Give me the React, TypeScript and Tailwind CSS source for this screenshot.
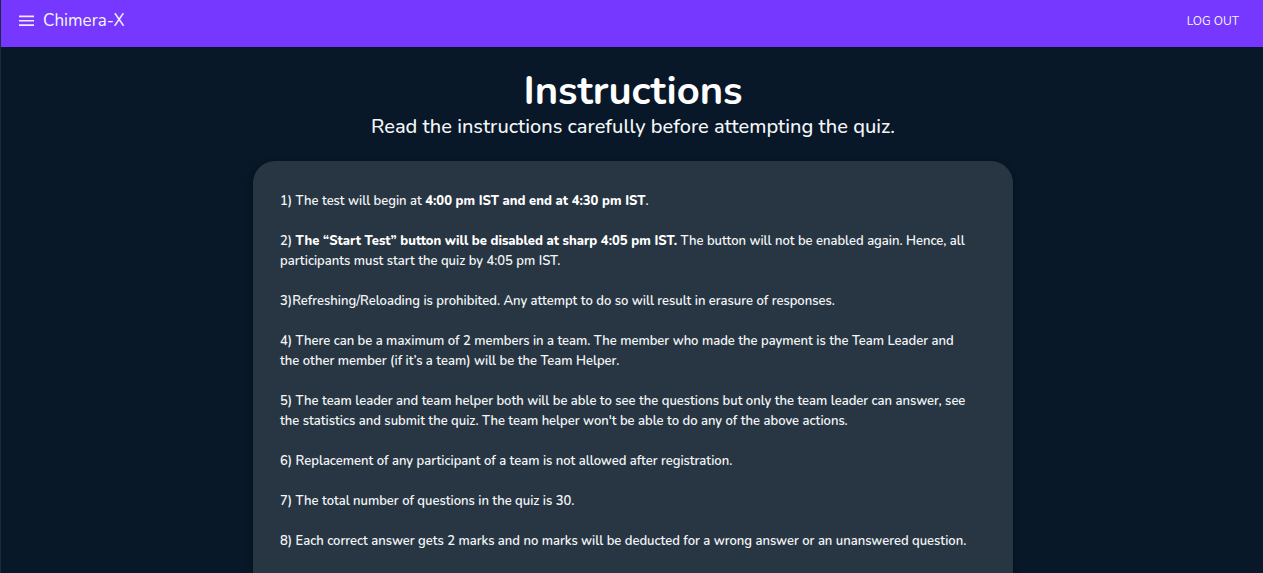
import type { ReactNode } from "react";

function Strong({ children }: { children: ReactNode }) {
  return <strong className="font-extrabold text-white">{children}</strong>;
}

const instructions: ReactNode[] = [
  <>
    1) The test will begin at <Strong>4:00 pm IST and end at 4:30 pm IST</Strong>.
  </>,
  <>
    2) <Strong>The “Start Test” button will be disabled at sharp 4:05 pm IST.</Strong> The button
    will not be enabled again. Hence, all <br />
    participants must start the quiz by 4:05 pm IST.
  </>,
  <>3)Refreshing/Reloading is prohibited. Any attempt to do so will result in erasure of responses.</>,
  <>
    4) There can be a maximum of 2 members in a team. The member who made the payment is the Team
    Leader and <br />
    the other member (if it’s a team) will be the Team Helper.
  </>,
  <>
    5) The team leader and team helper both will be able to see the questions but only the team
    leader can answer, see <br />
    the statistics and submit the quiz. The team helper won't be able to do any of the above
    actions.
  </>,
  <>6) Replacement of any participant of a team is not allowed after registration.</>,
  <>7) The total number of questions in the quiz is 30.</>,
  <>
    8) Each correct answer gets 2 marks and no marks will be deducted for a wrong answer or an
    unanswered question.
  </>,
];

function NavBar() {
  return (
    <header className="flex h-[47px] shrink-0 items-center justify-between bg-[#7638ff] pr-6 pb-1.5 pl-[17px]">
      <div className="flex items-center gap-2">
        <button type="button" aria-label="Open menu">
          <svg viewBox="0 0 17 12" className="h-3 w-[17px]" fill="#f6e8ff" aria-hidden="true">
            <path d="M1 .6h15v1.7H1zM1 4.9h15v1.7H1zM1 9.2h15v1.7H1z" />
          </svg>
        </button>
        <span className="text-[17px] leading-6">Chimera-X</span>
      </div>
      <button type="button" className="text-[12px] leading-5">
        LOG OUT
      </button>
    </header>
  );
}

export default function App() {
  return (
    <div className="flex min-h-screen flex-col border-l border-[#1c2b3b] bg-[#081828] font-['Nunito','Lato',sans-serif] text-[#f4f6f8]">
      <NavBar />
      <main className="flex flex-1 flex-col items-center pt-6 pr-6 pl-[26px]">
        <h1 className="text-center text-[40px] leading-10 font-bold text-white">Instructions</h1>
        <p className="pt-1 text-center text-[20px] leading-6 font-medium">
          Read the instructions carefully before attempting the quiz.
        </p>
        <section className="mt-[22px] flex w-full max-w-[760px] flex-1 flex-col gap-5 rounded-t-[22px] bg-[#283643] px-[27px] pt-[30px] pb-[23px] text-[13px] leading-5 font-semibold shadow-[0_2px_6px_rgba(0,0,0,0.35)]">
          {instructions.map((item, index) => (
            <p key={index}>{item}</p>
          ))}
        </section>
      </main>
    </div>
  );
}
